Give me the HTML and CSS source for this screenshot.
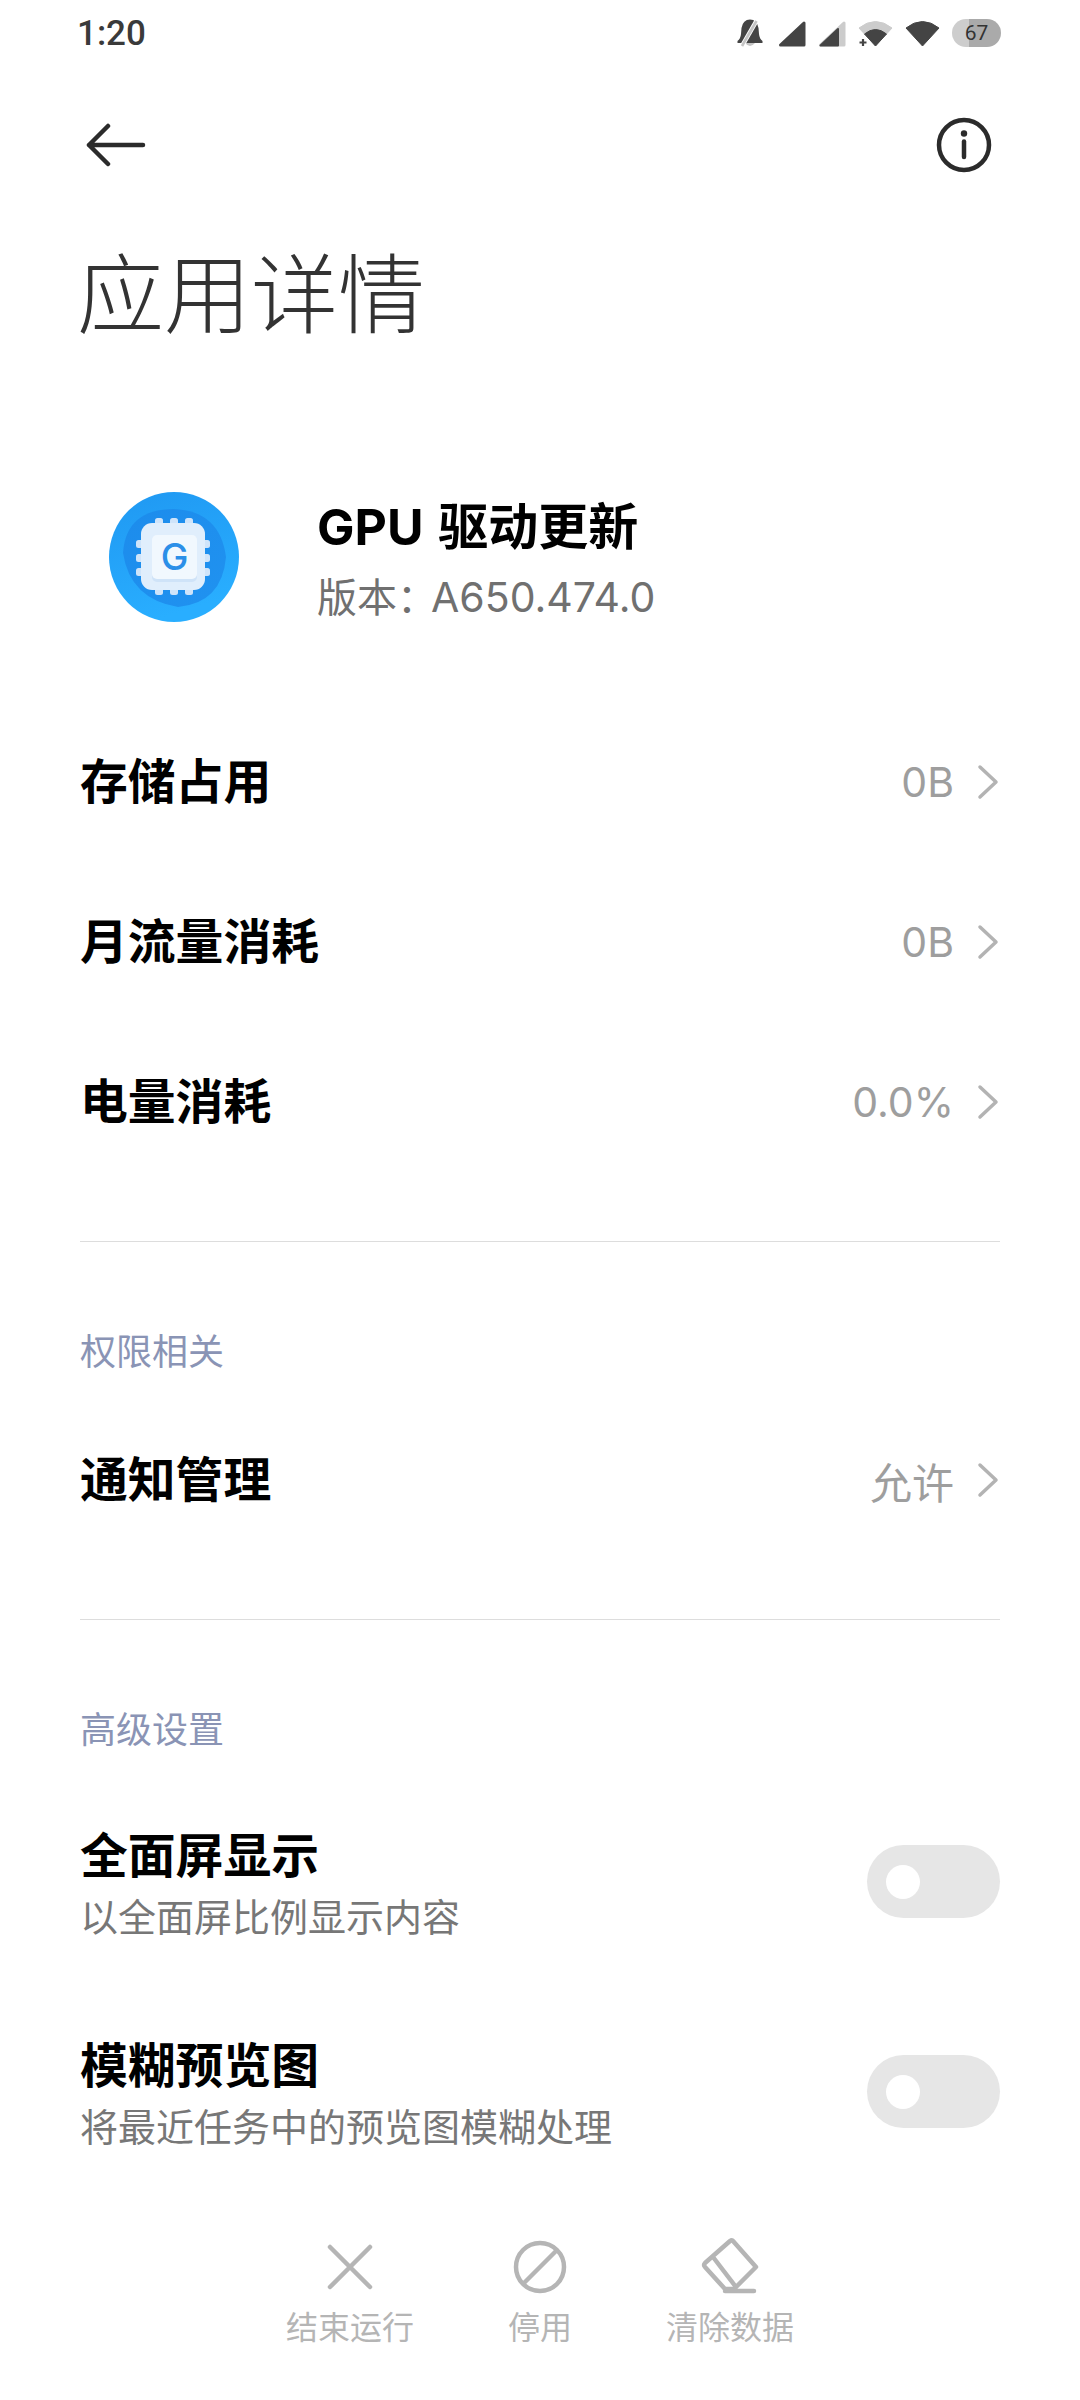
FILE: index.html
```html
<!DOCTYPE html>
<html lang="zh">
<head>
<meta charset="utf-8">
<link rel="stylesheet" href="styles.css">
<title>应用详情</title>
</head>
<body>
<div class="page">
  <div class="status">
    <span class="time">1:20</span>
    <div class="status-icons">
      <svg class="bell" width="26" height="28" viewBox="0 0 26 28"><path d="M0.500 22 Q3.500 20 4 15 L4.500 9 Q6 0.500 13 0.500 Q20 0.500 21.500 9 L22 15 Q22.500 20 25.500 22 V24 H0.500 Z" fill="#444"/><path d="M8 24 Q13 30 18 24 Z" fill="#c4c4c4"/><path d="M5 27 L20 1" stroke="#fff" stroke-width="4.500"/><path d="M5 27 L19.500 2" stroke="#c4c4c4" stroke-width="2.600"/></svg>
      <svg width="28" height="27" viewBox="0 0 28 27"><path d="M26 3 V25 H2.500 Z" fill="#444" stroke="#444" stroke-width="3" stroke-linejoin="round"/></svg>
      <svg width="28" height="27" viewBox="0 0 28 27"><path d="M26 3 V25 H2.500 Z" fill="#ccc" stroke="#ccc" stroke-width="3" stroke-linejoin="round"/><path d="M20 9 V25.500 H2.500 Z" fill="#444" stroke="#444" stroke-width="2" stroke-linejoin="round"/></svg>
      <svg width="35" height="28" viewBox="0 0 35 28"><path d="M1 9 Q17.500 -4 34 9 L17.500 27 Z" fill="#ccc" stroke="#ccc" stroke-linejoin="round"/><path d="M6.500 15 Q17.500 6 28.500 15 L17.500 27 Z" fill="#444" stroke="#444" stroke-linejoin="round"/><path d="M1 23.500 H9 M5 19.500 V27.500" stroke="#fff" stroke-width="5"/><path d="M1.500 23.500 H8.500 M5 20 V27" stroke="#444" stroke-width="2.200"/></svg>
      <svg width="35" height="28" viewBox="0 0 35 28"><path d="M1 9 Q17.500 -4 34 9 L17.500 27 Z" fill="#444" stroke="#444" stroke-linejoin="round"/></svg>
      <span class="battery">67</span>
    </div>
  </div>
  <div class="toolbar">
    <svg width="60" height="44" viewBox="0 0 60 44"><path d="M3 22 H57 M22 3 L3 22 L22 41" fill="none" stroke="#2b2b2b" stroke-width="4.500" stroke-linecap="round" stroke-linejoin="round"/></svg>
    <svg width="56" height="56" viewBox="0 0 56 56"><circle cx="28" cy="28" r="25" fill="none" stroke="#2b2b2b" stroke-width="4.500"/><circle cx="28" cy="16.500" r="3.200" fill="#2b2b2b"/><path d="M28 24.500 V40" stroke="#2b2b2b" stroke-width="4.500" stroke-linecap="round"/></svg>
  </div>
  <h1 class="title">应用详情</h1>
  <div class="app">
    <svg class="app-icon" width="132" height="132" viewBox="0 0 132 132">
      <defs>
        <linearGradient id="disc" x1="0" y1="0" x2="0.300" y2="1"><stop offset="0" stop-color="#1f98f2"/><stop offset="1" stop-color="#29aeff"/></linearGradient>
        <linearGradient id="swirl" x1="0" y1="0" x2="1" y2="1"><stop offset="0" stop-color="#1c8cec"/><stop offset="1" stop-color="#2092f0"/></linearGradient>
      </defs>
      <circle cx="66" cy="66" r="65" fill="url(#disc)"/>
      <path d="M15 62 Q18 18 66 18 Q112 20 118 66 Q114 112 70 116 Q22 108 15 62 Z" fill="url(#swirl)"/>
      <g fill="#cfe4fa">
        <rect x="47" y="27" width="8" height="10" rx="2.500"/><rect x="62" y="27" width="8" height="10" rx="2.500"/><rect x="77" y="27" width="8" height="10" rx="2.500"/>
        <rect x="47" y="94" width="8" height="10" rx="2.500"/><rect x="62" y="94" width="8" height="10" rx="2.500"/><rect x="77" y="94" width="8" height="10" rx="2.500"/>
        <rect x="28" y="49" width="10" height="8" rx="2.500"/><rect x="28" y="63" width="10" height="8" rx="2.500"/><rect x="28" y="77" width="10" height="8" rx="2.500"/>
        <rect x="92" y="49" width="10" height="8" rx="2.500"/><rect x="92" y="63" width="10" height="8" rx="2.500"/><rect x="92" y="77" width="10" height="8" rx="2.500"/>
      </g>
      <rect x="33" y="32" width="64" height="67" rx="11" fill="#e0eefc"/>
      <rect x="44" y="46" width="45" height="45" rx="5" fill="#cfe3f8"/>
      <rect x="44" y="44" width="45" height="44" rx="5" fill="#f1f8fe"/>
      <text x="66.500" y="79" class="chip-g">G</text>
    </svg>
    <div class="app-text">
      <div class="app-name">GPU 驱动更新</div>
      <div class="app-ver">版本<span class="colon">：</span><span class="ver-num">A650.474.0</span></div>
    </div>
  </div>
  <div class="rows">
    <div class="row"><span class="label">存储占用</span><span class="value num">0B</span><svg class="chev" width="24" height="36" viewBox="0 0 24 36"><path d="M4 3 L20 18 L4 33" fill="none" stroke="#b3b3b3" stroke-width="3.500" stroke-linecap="round" stroke-linejoin="round"/></svg></div>
    <div class="row"><span class="label">月流量消耗</span><span class="value num">0B</span><svg class="chev" width="24" height="36" viewBox="0 0 24 36"><path d="M4 3 L20 18 L4 33" fill="none" stroke="#b3b3b3" stroke-width="3.500" stroke-linecap="round" stroke-linejoin="round"/></svg></div>
    <div class="row"><span class="label">电量消耗</span><span class="value num">0.0%</span><svg class="chev" width="24" height="36" viewBox="0 0 24 36"><path d="M4 3 L20 18 L4 33" fill="none" stroke="#b3b3b3" stroke-width="3.500" stroke-linecap="round" stroke-linejoin="round"/></svg></div>
  </div>
  <div class="divider"></div>
  <div class="section">权限相关</div>
  <div class="row"><span class="label">通知管理</span><span class="value">允许</span><svg class="chev" width="24" height="36" viewBox="0 0 24 36"><path d="M4 3 L20 18 L4 33" fill="none" stroke="#b3b3b3" stroke-width="3.500" stroke-linecap="round" stroke-linejoin="round"/></svg></div>
  <div class="divider"></div>
  <div class="section section-adv">高级设置</div>
  <div class="toggle-row">
    <div class="toggle-text"><div class="label">全面屏显示</div><div class="sub">以全面屏比例显示内容</div></div>
    <div class="switch"><span class="knob"></span></div>
  </div>
  <div class="toggle-row">
    <div class="toggle-text"><div class="label">模糊预览图</div><div class="sub">将最近任务中的预览图模糊处理</div></div>
    <div class="switch"><span class="knob"></span></div>
  </div>
  <div class="actions">
    <div class="action"><svg width="60" height="60" viewBox="0 0 60 60"><path d="M10 10 L50 50 M50 10 L10 50" stroke="#b5b5b5" stroke-width="4.500" stroke-linecap="round"/></svg><span>结束运行</span></div>
    <div class="action"><svg width="60" height="60" viewBox="0 0 60 60"><circle cx="30" cy="30" r="24" fill="none" stroke="#b5b5b5" stroke-width="4.500"/><path d="M14 46 L46 14" stroke="#b5b5b5" stroke-width="4.500"/></svg><span>停用</span></div>
    <div class="action"><svg width="60" height="60" viewBox="0 0 60 60"><path d="M33 4 L56 30 L34 52 H25 L5 30 Q3 28 5 26 L30 4 Q32 2.500 33 4 Z M13 20 L36 50 M25 54 H54" fill="none" stroke="#b5b5b5" stroke-width="4.500" stroke-linecap="round" stroke-linejoin="round"/></svg><span>清除数据</span></div>
  </div>
</div>
</body>
</html>
```
FILE: styles.css
```css
* { box-sizing: border-box; }
html, body { margin: 0; padding: 0; background: #fff; }
body { font-family: "Inter", "Noto Sans CJK SC", "Noto Sans", sans-serif; }
.page { width: 1080px; height: 2400px; overflow: hidden; padding: 0 80px; }
.status { height: 64px; padding-top: 2px; display: flex; justify-content: space-between; align-items: center; margin-right: -1px; margin-left: -3px; }
.time { font-size: 35px; color: #3a3a3a; font-family: "Roboto", sans-serif; font-weight: 500; }
.status-icons { display: flex; align-items: center; gap: 12px; }
.bell { margin-right: 3px; }
.battery { width: 49px; height: 28px; border-radius: 14px; background: linear-gradient(90deg, #cdcdcd 34%, #aaa 34%); color: #333; font-size: 21px; display: flex; align-items: center; justify-content: center; font-family: "Roboto", sans-serif; }
.toolbar { display: flex; justify-content: space-between; align-items: center; height: 100px; margin-top: 31px; padding: 0 8px 0 6px; }
.title { font-size: 87px; font-weight: 200; color: #333; margin: 39px 0 0 -3px; line-height: 124px; height: 124px; }
.app { display: flex; align-items: center; margin-top: 129px; padding-left: 28px; height: 140px; }
.app-text { margin-left: 77px; padding-top: 3px; }
.app-name { font-size: 50px; font-weight: 700; color: #000; line-height: 72px; word-spacing: 3px; }
.app-ver { font-size: 40px; color: #707070; line-height: 58px; padding-top: 3px; }
.colon { font-family: "Noto Sans CJK TC", sans-serif; font-feature-settings: "halt"; margin-right: 14px; }
.ver-num { font-size: 41px; }
.chip-g { font-family: "Inter", sans-serif; font-weight: 500; font-size: 37px; fill: #2b8fe8; text-anchor: middle; }
.rows { margin-top: 75px; }
.row { height: 160px; display: flex; align-items: center; }
.label { font-size: 47.8px; font-weight: 700; color: #000; line-height: 62px; }
.row .label { flex: 1; }
.value { font-size: 42px; color: #9e9e9e; margin-right: 22px; }
.value.num { font-size: 41px; }
.divider { height: 1px; background: #ddd; margin-top: 59px; }
.section { font-size: 36px; color: #8a94b5; margin-top: 85px; line-height: 50px; margin-bottom: 23px; }
.section-adv { margin-bottom: 21px; }
.toggle-row { display: flex; justify-content: space-between; align-items: center; height: 210px; }
.toggle-text { padding-top: 6px; }
.sub { font-size: 38px; color: #777; line-height: 52px; margin-top: 4px; }
.switch { width: 133px; height: 73px; border-radius: 37px; background: #e6e6e6; padding: 20px 19px; }
.knob { display: block; width: 34px; height: 34px; border-radius: 50%; background: #fff; }
.actions { display: flex; justify-content: center; gap: 60px; margin-top: 41px; }
.action { display: flex; flex-direction: column; align-items: center; gap: 9px; width: 130px; font-size: 32px; line-height: 44px; color: #b5b5b5; white-space: nowrap; }
```
